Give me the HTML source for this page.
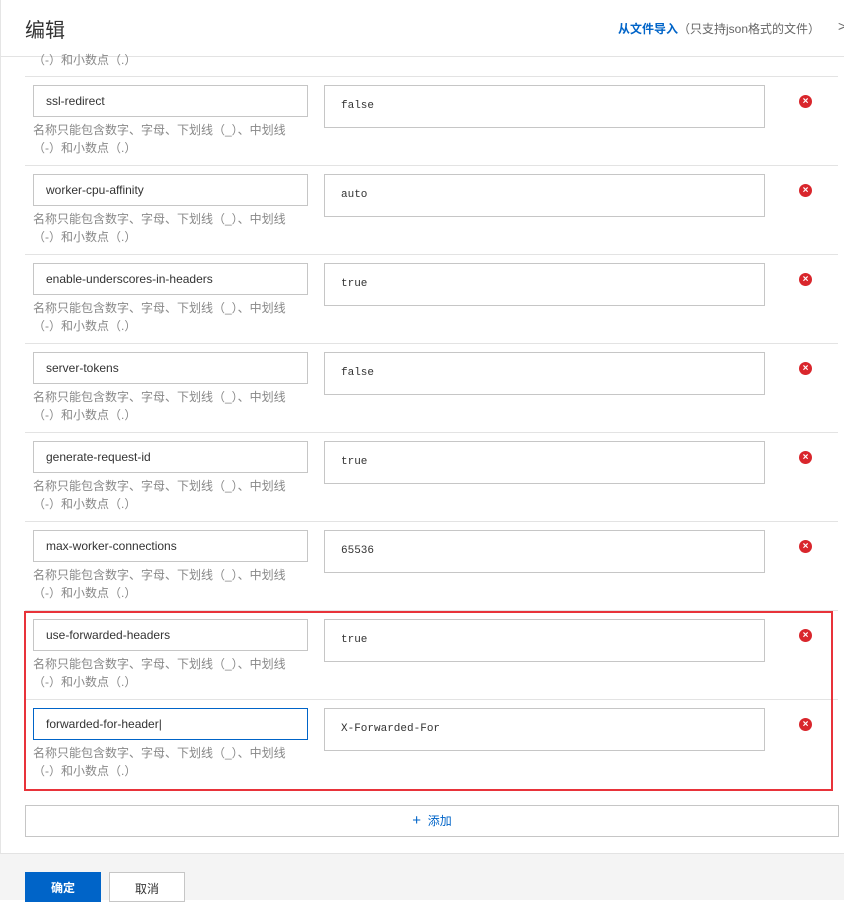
<!DOCTYPE html>
<html><head><meta charset="utf-8"><style>
*{margin:0;padding:0;box-sizing:border-box}
body{width:844px;height:900px;overflow:hidden;background:#fff;font-family:"Liberation Sans","Noto Sans CJK SC",sans-serif;position:relative}
.a{position:absolute}
.hdr{left:0;top:0;width:844px;height:57px;border-bottom:1px solid #e3e3e3;border-left:1px solid #e5e5e5}
.title{left:25px;top:14px;font-size:20px;color:#333}
.imp{left:618px;top:20px;font-size:12px;color:#666}
.imp b{color:#0064c8;font-weight:bold}
.sep{left:25px;width:813px;height:1px;background:#e3e3e3}
.name{left:33px;width:275px;height:32px;border:1px solid #c6c6c6;font-size:12px;color:#333;padding:8px 12px}
.val{left:324px;width:441px;height:43px;border:1px solid #c6c6c6;font-family:"Liberation Mono","DejaVu Sans Mono",monospace;font-size:11px;color:#333;padding:14px 16px}
.hint{left:33px;width:262px;font-size:12px;color:#888;line-height:18px}
.del{left:799px;width:13px;height:13px;border-radius:50%;background:#d9262c;color:#fff;font-size:10px;line-height:13px;text-align:center;font-weight:bold}
</style></head><body>
<div class="a" style="left:0;top:0;width:1px;height:853px;background:#e5e5e5"></div>
<div class="a hdr"></div>
<div class="a title">编辑</div>
<div class="a imp"><b>从文件导入</b>（只支持json格式的文件）</div>
<div class="a" style="left:838px;top:18px;font-size:14px;color:#666">&gt;</div>
<div class="a hint" style="top:51px">（-）和小数点（.）</div>
<div class="a sep" style="top:76px"></div>

<div class="a name" style="top:85px">ssl-redirect</div><div class="a val" style="top:85px">false</div><div class="a hint" style="top:121px">名称只能包含数字、字母、下划线（_）、中划线（-）和小数点（.）</div><div class="a del" style="top:95px">×</div><div class="a sep" style="top:165px"></div>
<div class="a name" style="top:174px">worker-cpu-affinity</div><div class="a val" style="top:174px">auto</div><div class="a hint" style="top:210px">名称只能包含数字、字母、下划线（_）、中划线（-）和小数点（.）</div><div class="a del" style="top:184px">×</div><div class="a sep" style="top:254px"></div>
<div class="a name" style="top:263px">enable-underscores-in-headers</div><div class="a val" style="top:263px">true</div><div class="a hint" style="top:299px">名称只能包含数字、字母、下划线（_）、中划线（-）和小数点（.）</div><div class="a del" style="top:273px">×</div><div class="a sep" style="top:343px"></div>
<div class="a name" style="top:352px">server-tokens</div><div class="a val" style="top:352px">false</div><div class="a hint" style="top:388px">名称只能包含数字、字母、下划线（_）、中划线（-）和小数点（.）</div><div class="a del" style="top:362px">×</div><div class="a sep" style="top:432px"></div>
<div class="a name" style="top:441px">generate-request-id</div><div class="a val" style="top:441px">true</div><div class="a hint" style="top:477px">名称只能包含数字、字母、下划线（_）、中划线（-）和小数点（.）</div><div class="a del" style="top:451px">×</div><div class="a sep" style="top:521px"></div>
<div class="a name" style="top:530px">max-worker-connections</div><div class="a val" style="top:530px">65536</div><div class="a hint" style="top:566px">名称只能包含数字、字母、下划线（_）、中划线（-）和小数点（.）</div><div class="a del" style="top:540px">×</div><div class="a sep" style="top:610px"></div>
<div class="a name" style="top:619px">use-forwarded-headers</div><div class="a val" style="top:619px">true</div><div class="a hint" style="top:655px">名称只能包含数字、字母、下划线（_）、中划线（-）和小数点（.）</div><div class="a del" style="top:629px">×</div><div class="a sep" style="top:699px"></div>
<div class="a name" style="top:708px;border-color:#0064c8">forwarded-for-header|</div><div class="a val" style="top:708px">X-Forwarded-For</div><div class="a hint" style="top:744px">名称只能包含数字、字母、下划线（_）、中划线（-）和小数点（.）</div><div class="a del" style="top:718px">×</div>

<div class="a" style="left:24px;top:611px;width:809px;height:180px;border:2px solid #e8333a"></div>
<div class="a" style="left:25px;top:805px;width:814px;height:32px;border:1px solid #c6c6c6;text-align:center;font-size:12px;color:#0064c8;line-height:30px"><span style="font-size:15px">+</span>&nbsp;&nbsp;添加</div>
<div class="a" style="left:0;top:853px;width:844px;height:47px;background:#f4f4f4;border-top:1px solid #e3e3e3"></div>
<div class="a" style="left:25px;top:872px;width:76px;height:30px;background:#0064c8;color:#fff;font-size:12px;text-align:center;line-height:32px;font-weight:bold">确定</div>
<div class="a" style="left:109px;top:872px;width:76px;height:30px;background:#fff;border:1px solid #c6c6c6;color:#333;font-size:12px;text-align:center;line-height:32px">取消</div>
</body></html>
